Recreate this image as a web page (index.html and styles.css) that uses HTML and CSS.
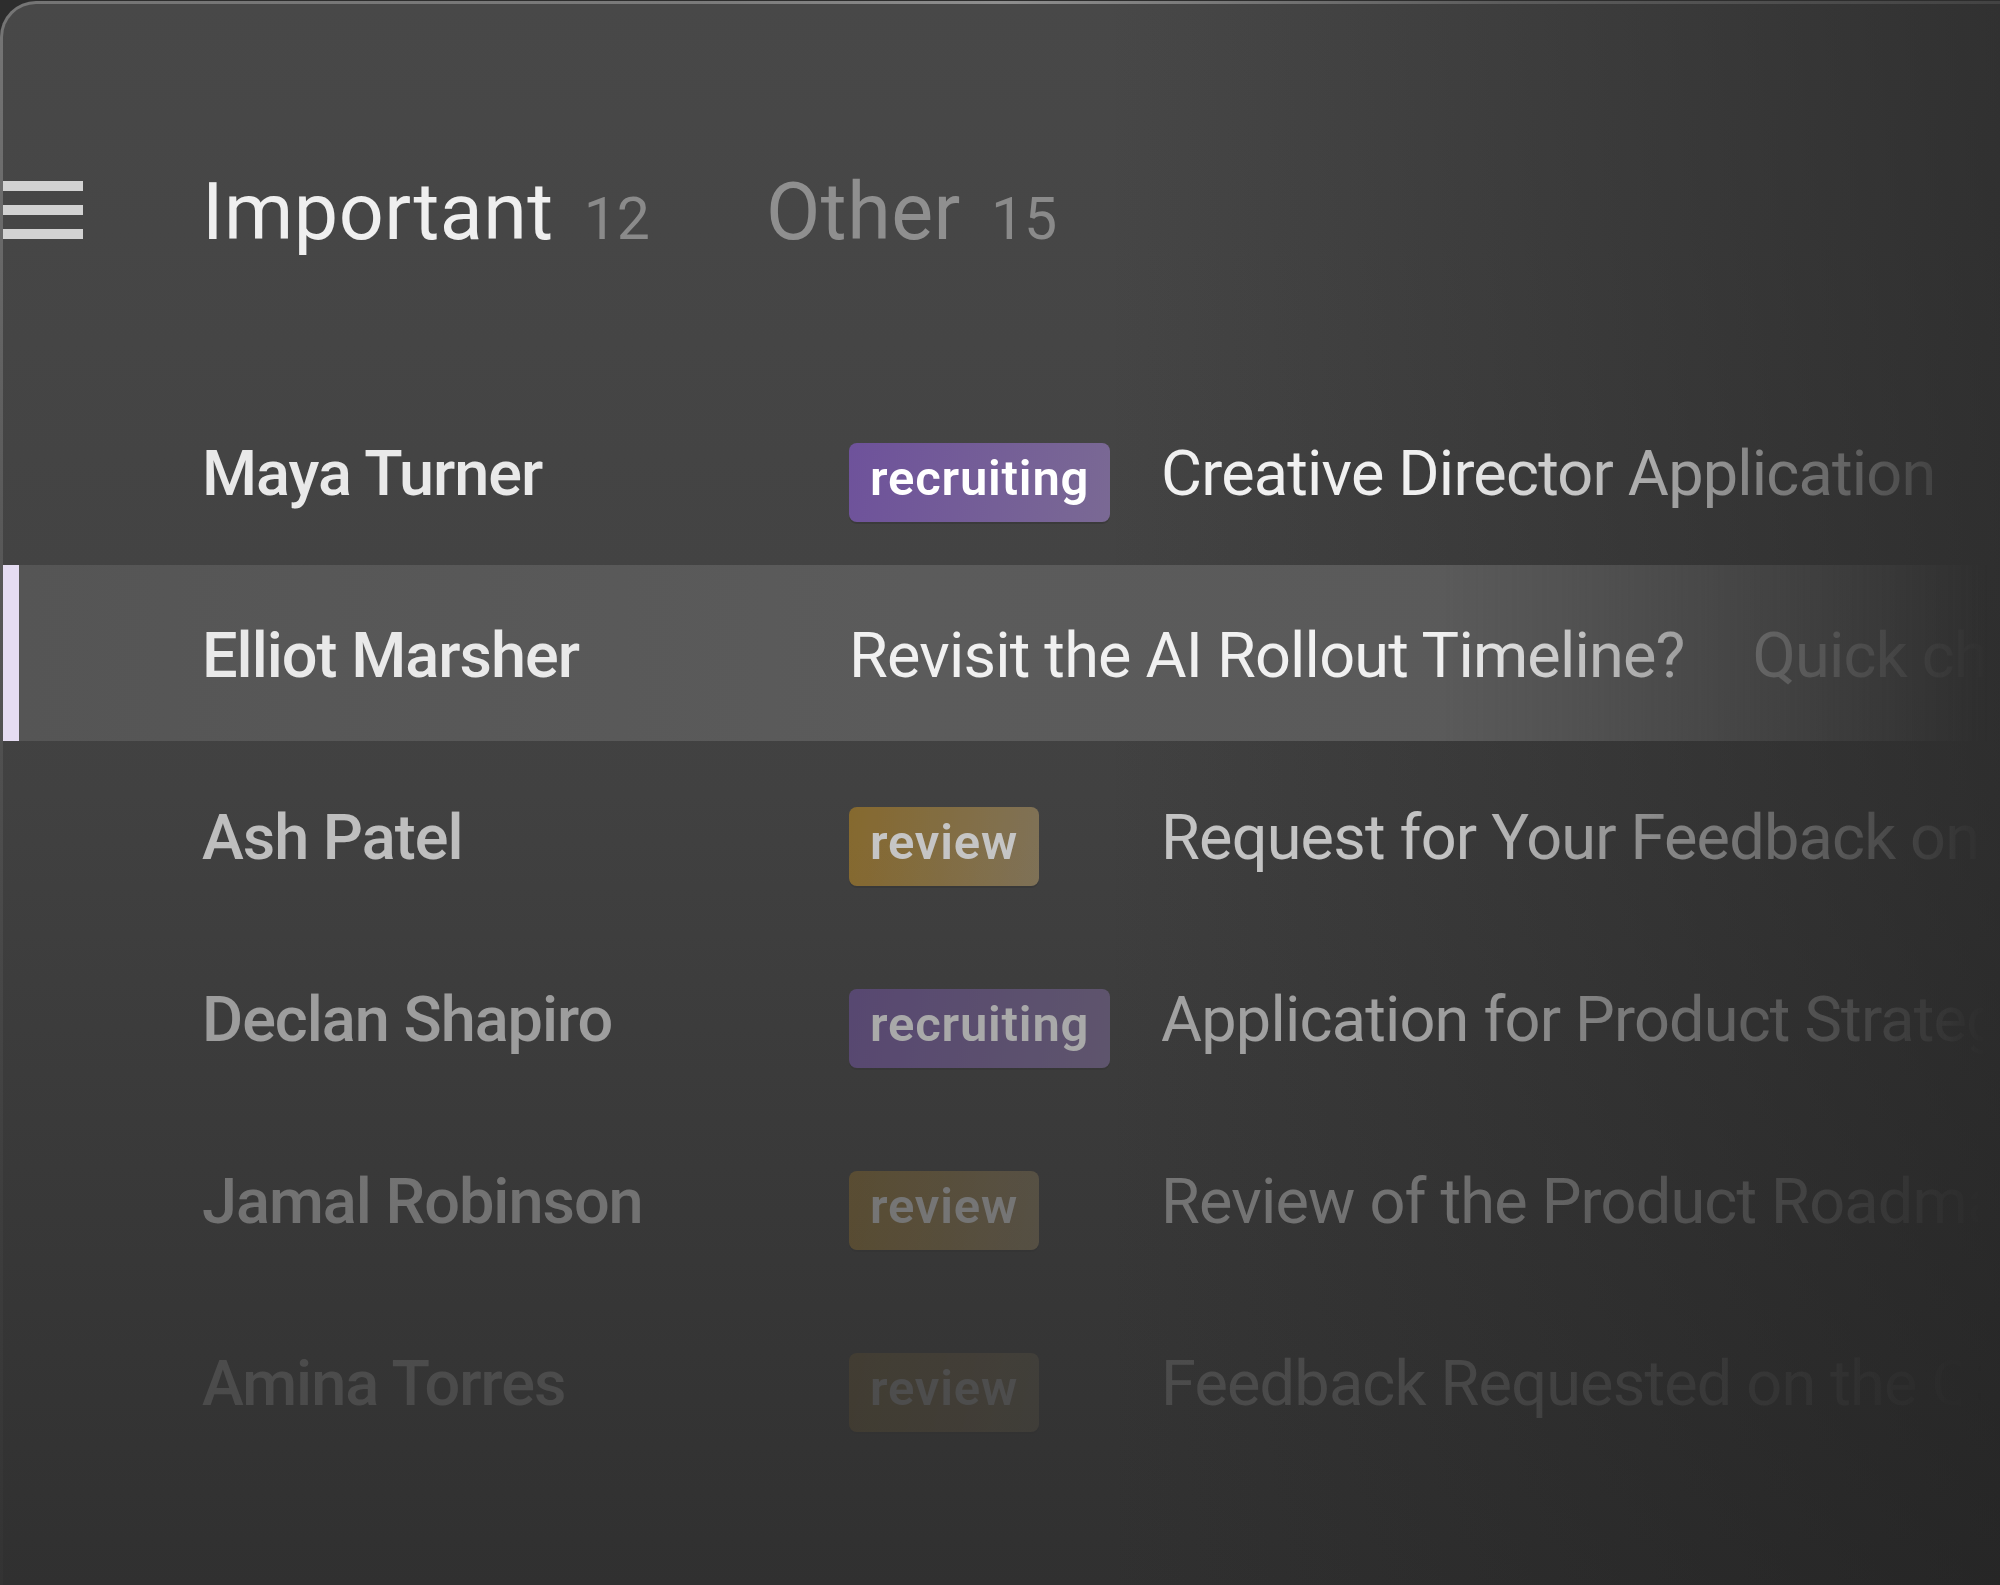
FILE: index.html
```html
<!DOCTYPE html>
<html lang="en">
<head>
<meta charset="utf-8">
<title>Inbox</title>
<link rel="stylesheet" href="styles.css">
</head>
<body>
<div class="card">
  <header class="tabs">
    <svg class="menu" width="80" height="58" viewBox="0 0 80 58" aria-hidden="true">
      <rect x="0" y="0" width="80" height="10"/>
      <rect x="0" y="24" width="80" height="10"/>
      <rect x="0" y="48" width="80" height="10"/>
    </svg>
    <div class="tab tab-active"><span class="tab-label">Important</span><span class="tab-count">12</span></div>
    <div class="tab"><span class="tab-label">Other</span><span class="tab-count">15</span></div>
  </header>
  <ul class="list">
    <li class="row fade-0">
      <span class="name">Maya Turner</span>
      <span class="tag tag-recruiting">recruiting</span>
      <span class="subject">Creative Director Application</span>
    </li>
    <li class="row row-selected fade-0">
      <span class="name">Elliot Marsher</span>
      <span class="subject subject-wide">Revisit the AI Rollout Timeline?<span class="preview">Quick check</span></span>
    </li>
    <li class="row fade-1">
      <span class="name">Ash Patel</span>
      <span class="tag tag-review">review</span>
      <span class="subject">Request for Your Feedback on</span>
    </li>
    <li class="row fade-2">
      <span class="name">Declan Shapiro</span>
      <span class="tag tag-recruiting">recruiting</span>
      <span class="subject">Application for Product Strategy</span>
    </li>
    <li class="row fade-3">
      <span class="name">Jamal Robinson</span>
      <span class="tag tag-review">review</span>
      <span class="subject">Review of the Product Roadmap</span>
    </li>
    <li class="row fade-4">
      <span class="name">Amina Torres</span>
      <span class="tag tag-review">review</span>
      <span class="subject">Feedback Requested on the Q3</span>
    </li>
  </ul>
</div>
</body>
</html>
```

FILE: styles.css
```css
* {
  box-sizing: border-box;
  margin: 0;
  padding: 0;
}

html,
body {
  width: 2000px;
  height: 1585px;
  overflow: hidden;
}

body {
  background: #2d2d2d;
  font-family: Roboto, "Liberation Sans", sans-serif;
  padding-top: 1px;
}

.card {
  width: 2000px;
  height: 1584px;
  border-top: 3px solid transparent;
  border-left: 3px solid transparent;
  border-top-left-radius: 36px;
  background:
    linear-gradient(to right, rgba(30, 30, 30, 0) 1100px, rgba(30, 30, 30, 0.55) 2000px) padding-box,
    linear-gradient(to bottom, #484848 0%, #414141 50%, #303030 100%) padding-box,
    linear-gradient(to right, #747474 0px, #7a7a7a 700px, #8e8e8e 1000px, #5c5c5c 1500px, #434343 2000px) border-box top left / 100% 3px no-repeat,
    linear-gradient(to bottom, #767676 0px, #5a5a5a 500px, #3e3e3e 1200px, #333333 1585px) border-box;
}

/* header tabs */
.tabs {
  display: flex;
  align-items: baseline;
  padding-top: 162px;
}

.menu {
  display: block;
  fill: #d2d2d2;
  margin-right: 119px;
}

.tab {
  display: flex;
  align-items: baseline;
  margin-right: 116px;
}

.tab-label {
  font-size: 79px;
  font-weight: 400;
  color: #8f8f8f;
  letter-spacing: 0.5px;
}

.tab-active .tab-label {
  color: #efefef;
}

.tab-count {
  font-size: 59px;
  color: #8a8a8a;
  margin-left: 30px;
}

/* list */
.list {
  list-style: none;
  margin-top: 125px;
  display: flex;
  flex-direction: column;
  gap: 6px;
  -webkit-mask-image: linear-gradient(to right, #000 1440px, transparent 1985px);
  mask-image: linear-gradient(to right, #000 1440px, transparent 1985px);
}

.row {
  display: grid;
  grid-template-columns: 647px 312px 1fr;
  align-items: baseline;
  height: 176px;
  padding-top: 54px;
  padding-left: 183px;
  border-left: 16px solid transparent;
  white-space: nowrap;
}

.row-selected {
  border-left-color: #e5dcf2;
  background: linear-gradient(to right, #555555 0px, #5b5b5b 900px, #5a5a5a 1500px);
}

.fade-1 { opacity: 0.75; }
.fade-2 { opacity: 0.56; }
.fade-3 { opacity: 0.33; }
.fade-4 { opacity: 0.13; }

.name {
  font-size: 63px;
  font-weight: 500;
  color: #e9e9e9;
  letter-spacing: -1px;
}

.subject {
  font-size: 63px;
  font-weight: 400;
  color: #f0f0f0;
  letter-spacing: -0.8px;
  overflow: hidden;
}

.subject-wide {
  grid-column: 2 / 4;
}

.preview {
  color: #a8a8a8;
  margin-left: 68px;
}

.tag {
  justify-self: start;
  height: 79px;
  padding: 7px 21px 0;
  border-radius: 8px;
  font-size: 49px;
  font-weight: 600;
  color: #ffffff;
  letter-spacing: 0.8px;
  box-shadow: 0 2px 0 rgba(0, 0, 0, 0.12);
}

.tag-recruiting {
  background: linear-gradient(100deg, #6e529b 0%, #7a6994 100%);
}

.tag-review {
  background: linear-gradient(100deg, #9d7729 0%, #958360 100%);
  color: #f2f2f2;
}
```
